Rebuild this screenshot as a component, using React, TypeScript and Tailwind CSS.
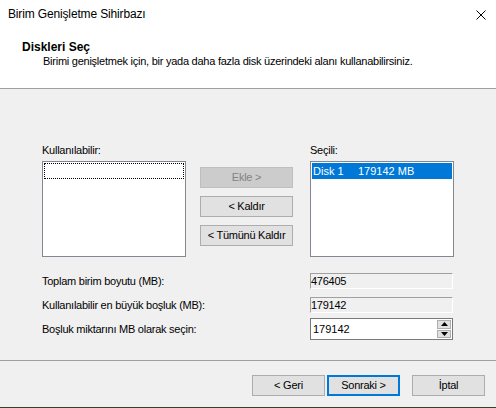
import React from "react";

const Btn: React.FC<{ label: string; disabled?: boolean; primary?: boolean; className?: string }> = ({
  label,
  disabled,
  primary,
  className = "",
}) => {
  const look = disabled
    ? "bg-[#cccccc] border-[#bfbfbf] text-[#838383]"
    : primary
    ? "bg-[#e1e1e1] border-[#0078d7] border-2 text-black"
    : "bg-[#e1e1e1] border-[#adadad] text-black";
  return (
    <div className={`h-[21px] border flex items-center justify-center ${look} ${className}`}>
      {label}
    </div>
  );
};

const ReadOnlyBox: React.FC<{ value: string }> = ({ value }) => (
  <div className="w-[143px] h-[16px] border border-t-[#a0a0a0] border-l-[#a0a0a0] border-r-white border-b-white bg-[#f0f0f0] flex items-center leading-[14px]">
    {value}
  </div>
);

const App: React.FC = () => {
  return (
    <div
      className="w-[496px] h-[408px] bg-[#f0f0f0] flex flex-col text-[11px] tracking-[-0.25px] text-black overflow-hidden"
      style={{ fontFamily: '"Liberation Sans", Arial, sans-serif' }}
    >
      {/* header */}
      <div className="h-[89px] bg-white border-b border-[#a0a0a0] flex flex-col">
        <div className="h-[28px] flex items-center justify-between pl-[8px] pr-[10px]">
          <span className="text-[12px] tracking-[-0.15px]">Birim Genişletme Sihirbazı</span>
          <svg width="10" height="10" viewBox="0 0 10 10" className="mt-[1px]">
            <path d="M0.5 0.5 L9.5 9.5 M9.5 0.5 L0.5 9.5" stroke="#000" strokeWidth="1" fill="none" />
          </svg>
        </div>
        <div className="mt-[12px] pl-[22px] font-bold text-[12px] tracking-normal leading-[14px]">Diskleri Seç</div>
        <div className="pl-[43px] leading-[13px] mt-[1px]">
          Birimi genişletmek için, bir yada daha fazla disk üzerindeki alanı kullanabilirsiniz.
        </div>
      </div>

      {/* body */}
      <div className="h-[271px] flex flex-col pt-[55px] pl-[42px]">
        <div className="flex">
          <div className="w-[144px] flex flex-col">
            <div className="h-[13px] leading-[13px] mb-[4px]">Kullanılabilir:</div>
            <div className="h-[96px] border border-[#828790] bg-white p-[1px]">
              <div className="h-[16px] border border-dotted border-black" />
            </div>
          </div>
          <div className="w-[93px] ml-[14px] pt-[23px] flex flex-col gap-[8px]">
            <Btn label="Ekle >" disabled />
            <Btn label="< Kaldır" />
            <Btn label="< Tümünü Kaldır" />
          </div>
          <div className="w-[144px] ml-[17px] flex flex-col">
            <div className="h-[13px] leading-[13px] mb-[4px]">Seçili:</div>
            <div className="h-[96px] border border-[#828790] bg-white p-[1px]">
              <div className="h-[16px] bg-[#0078d7] text-white flex items-center pl-[1px] tracking-normal">
                <span className="w-[45px]">Disk 1</span>
                <span>179142 MB</span>
              </div>
            </div>
          </div>
        </div>

        <div className="mt-[16px] flex flex-col gap-[7px]">
          <div className="flex items-center">
            <span className="w-[268px]">Toplam birim boyutu (MB):</span>
            <ReadOnlyBox value="476405" />
          </div>
          <div className="flex items-center">
            <span className="w-[268px]">Kullanılabilir en büyük boşluk (MB):</span>
            <ReadOnlyBox value="179142" />
          </div>
          <div className="flex items-center -mt-[2px]">
            <span className="w-[268px]">Boşluk miktarını MB olarak seçin:</span>
            <div className="w-[143px] h-[22px] border border-[#7a7a7a] bg-white flex">
              <div className="flex-1 flex items-center pl-[2px] tracking-normal">179142</div>
              <div className="w-[16px] flex flex-col gap-[1px] p-[1px] bg-white">
                <div className="flex-1 bg-[#e1e1e1] border border-[#adadad] flex items-center justify-center">
                  <svg width="7" height="4" viewBox="0 0 7 4">
                    <path d="M3.5 0 L7 4 L0 4 Z" fill="#000" />
                  </svg>
                </div>
                <div className="flex-1 bg-[#e1e1e1] border border-[#adadad] flex items-center justify-center">
                  <svg width="7" height="4" viewBox="0 0 7 4">
                    <path d="M0 0 L7 0 L3.5 4 Z" fill="#000" />
                  </svg>
                </div>
              </div>
            </div>
          </div>
        </div>
      </div>

      {/* footer */}
      <div className="h-[47px] border-t border-[#a0a0a0] flex justify-end items-start pt-[14px] pr-[11px]">
        <Btn label="< Geri" className="w-[73px]" />
        <Btn label="Sonraki >" primary className="w-[73px] ml-[2px]" />
        <Btn label="İptal" className="w-[73px] ml-[12px]" />
      </div>
      <div className="h-[1px] bg-[#3b3d2b]" />
    </div>
  );
};

export default App;
